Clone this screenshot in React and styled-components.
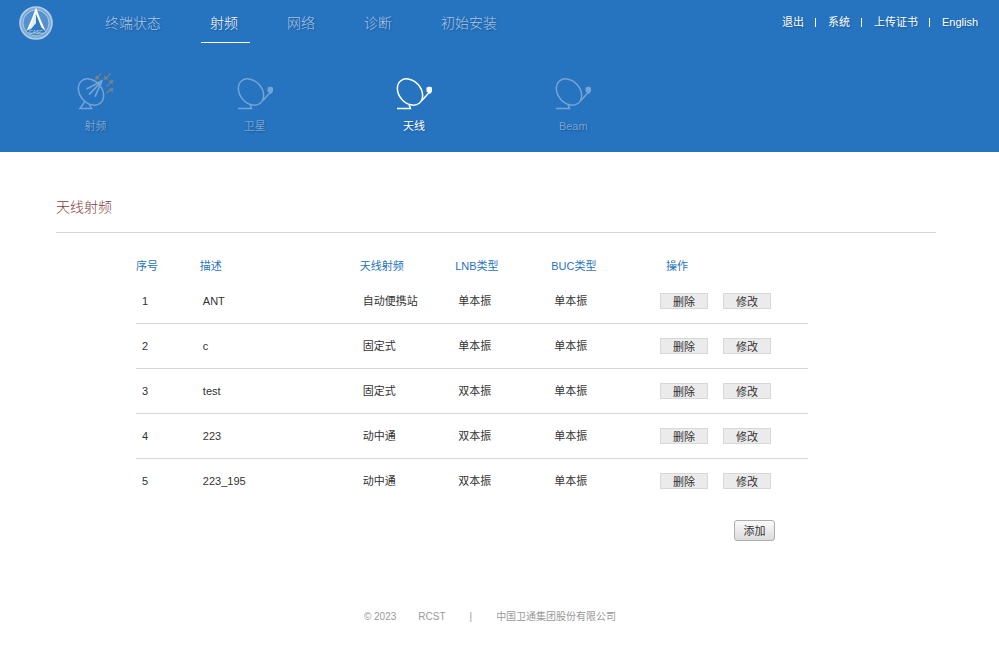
import React from "react";
import styled, { createGlobalStyle } from "styled-components";

const Global = createGlobalStyle`
  * { box-sizing: border-box; }
  body {
    margin: 0;
    background: #fff;
    color: #333;
    font: 11px/16px "Liberation Sans", "Noto Sans CJK SC", sans-serif;
  }
  button { font: inherit; color: inherit; }
`;

const Header = styled.header`
  height: 152px;
  background: #2673bf;
  color: #fff;
  text-shadow: 1px 1px 2px rgba(0, 0, 0, 0.25);
`;

const TopBar = styled.div`
  display: flex;
  height: 46px;
  padding: 0 21px 0 18px;
`;

const Brand = styled.a`
  width: 36px;
  height: 36px;
  margin: 5px 42px 0 0;
`;

const MainNav = styled.nav`
  display: flex;
  gap: 28px;
  margin-right: auto;
`;

const NavLink = styled.a`
  height: 43px;
  padding: 14px 12px 0 9px;
  border-bottom: 1px solid ${(p) => (p.$active ? "#fff" : "transparent")};
  color: ${(p) => (p.$active ? "#fff" : "#a8c6e6")};
  font-size: 14px;
  line-height: 18px;
  font-weight: 300;
  text-decoration: none;
  white-space: nowrap;
`;

const UserNav = styled.nav`
  display: flex;
  padding-top: 14px;
`;

const UserLink = styled.a`
  color: #fff;
  text-decoration: none;
  white-space: nowrap;

  & + &::before {
    content: "";
    display: inline-block;
    width: 1px;
    height: 9px;
    margin: 0 12px 0 11px;
    background: #fff;
    vertical-align: -1px;
  }
`;

const SubNav = styled.nav`
  display: flex;
  padding: 26px 18px 0 16px;
`;

const SubLink = styled.a`
  display: flex;
  flex: 0 0 16.5%;
  flex-direction: column;
  align-items: center;
  gap: 8px;
  color: ${(p) => (p.$active ? "#fff" : "#73a4d6")};
  text-decoration: none;

  svg { display: block; }
`;

const Main = styled.main`
  padding: 46px 63px 0 56px;
`;

const Title = styled.h1`
  margin: 0;
  padding-bottom: 15px;
  border-bottom: 1px solid #d8d8d8;
  color: #853c3c;
  font-size: 14px;
  font-weight: 300;
  line-height: 19px;
`;

const Content = styled.section`
  padding: 20px 128px 0 80px;
`;

const Table = styled.table`
  width: 100%;
  table-layout: fixed;
  border-collapse: separate;
  border-spacing: 0;
`;

const Col = styled.col`
  width: ${(p) => p.$w}%;
`;

const HeadCell = styled.th`
  height: 26px;
  padding: 0 0 0 ${(p) => (p.$inset ? 18 : 0)}px;
  color: #2673bf;
  font-weight: 400;
  text-align: left;
`;

const Row = styled.tr`
  & > td { border-bottom: 1px solid #d8d8d8; }
  &:last-child > td { border-color: transparent; }
`;

const Cell = styled.td`
  height: 45px;
  padding: 0 0 0 3px;

  &:first-child { padding-left: 6px; }
`;

const ActionCell = styled.td`
  padding: 0 0 0 12px;
`;

const Actions = styled.div`
  display: flex;
  gap: 15px;
`;

const RowButton = styled.button`
  width: 48px;
  height: 16px;
  padding: 1px 0 0;
  border: 1px solid #d8d8d8;
  background: #ebebeb;
  line-height: 14px;
`;

const AddRow = styled.div`
  display: flex;
  justify-content: flex-end;
  padding: 16px 33px 0 0;
`;

const AddButton = styled.button`
  width: 41px;
  height: 21px;
  padding: 1px 0 0;
  border: 1px solid #adadad;
  border-radius: 3px;
  background: linear-gradient(#fafafa, #dcdcdc);
  line-height: 18px;
`;

const Footer = styled.footer`
  display: flex;
  justify-content: center;
  padding: 68px 19px 24px 0;
  color: #999;
  font-size: 10px;
  line-height: 16px;
`;

const FooterText = styled.span`
  margin-left: ${(p) => p.$gap || 0}px;
`;

const Logo = () => (
  <svg width="36" height="36" viewBox="0 0 36 36" role="img" aria-label="CASC">
    <circle cx="18" cy="18" r="16" fill="#7dabd9" stroke="#b3cde9" strokeWidth="1.6" />
    <circle cx="18" cy="18" r="13" fill="#5591cd" stroke="#b9d2eb" strokeWidth="0.8" />
    <path d="M18 4 27 27H9Z" fill="#2f79c2" />
    <path d="M18 2.500 21.500 12 27.500 26 23.500 22.500 18 9 12.500 22.500 8.500 26 14.500 12Z" fill="#fff" />
    <path d="M18 9v9l-5 6-3 1Z" fill="#e2edf8" />
    <text x="18" y="28.500" fill="#d8e6f5" fontFamily="Liberation Sans" fontSize="5" textAnchor="middle">CASC</text>
  </svg>
);

const DishIcon = ({ signal }) => (
  <svg width="38" height="38" viewBox="0 0 38 38" fill="none" stroke="currentColor" strokeWidth="1.5" aria-hidden="true">
    {signal ? (
      <>
        <ellipse cx="14" cy="20" rx="11" ry="14.500" transform="rotate(-41 14 20)" />
        <path d="M7.500 30 3 36.500h11.500L12 32" />
        <path d="M25 9 9.500 17M25 9 12 22.700M25 9 18 24.700" strokeWidth="1.700" />
        <path d="m19.500 10.500 6.500-3-2.500 7Z" fill="currentColor" stroke="none" />
        <g stroke="#76818c" strokeWidth="1.200">
          <path d="M24.300 1.300 20 6M34 1.300 29 6M29.300 14.700 34 10M29.300 21.300 34 17.500" />
        </g>
        <path
          d="m18 8 1-5 4 3.500ZM26.500 8l1-4.500 4 3.500ZM36.500 7.500l-1 5-4-3.500ZM36.500 15.500l-1 5-4-3.500Z"
          fill="#76818c"
          stroke="none"
        />
      </>
    ) : (
      <>
        <ellipse cx="15" cy="20" rx="11" ry="14.500" transform="rotate(-41 15 20)" />
        <path d="m14 32.500 1.500 4H2M27 28.500l7.500-8.500v-3" />
        <path d="m31.500 15.500 3-1 2.500 1v4l-2 2.500-3.500-2.500Z" fill="currentColor" stroke="none" />
      </>
    )}
  </svg>
);

const mainItems = ["终端状态", "射频", "网络", "诊断", "初始安装"];
const userItems = ["退出", "系统", "上传证书", "English"];
const subItems = ["射频", "卫星", "天线", "Beam"];
const headings = ["序号", "描述", "天线射频", "LNB类型", "BUC类型", "操作"];
const widths = [9.5, 23.8, 14.2, 14.3, 14.4, 23.8];
const rows = [
  ["1", "ANT", "自动便携站", "单本振", "单本振"],
  ["2", "c", "固定式", "单本振", "单本振"],
  ["3", "test", "固定式", "双本振", "单本振"],
  ["4", "223", "动中通", "双本振", "单本振"],
  ["5", "223_195", "动中通", "双本振", "单本振"],
];

export default function App() {
  return (
    <>
      <Global />
      <Header>
        <TopBar>
          <Brand href="#"><Logo /></Brand>
          <MainNav>
            {mainItems.map((t, i) => <NavLink key={t} href="#" $active={i === 1}>{t}</NavLink>)}
          </MainNav>
          <UserNav>
            {userItems.map((t) => <UserLink key={t} href="#">{t}</UserLink>)}
          </UserNav>
        </TopBar>
        <SubNav>
          {subItems.map((t, i) => (
            <SubLink key={t} href="#" $active={i === 2}>
              <DishIcon signal={i === 0} />
              {t}
            </SubLink>
          ))}
        </SubNav>
      </Header>
      <Main>
        <Title>天线射频</Title>
        <Content>
          <Table>
            <colgroup>
              {widths.map((w, i) => <Col key={i} $w={w} />)}
            </colgroup>
            <thead>
              <tr>
                {headings.map((h, i) => <HeadCell key={h} scope="col" $inset={i === 5}>{h}</HeadCell>)}
              </tr>
            </thead>
            <tbody>
              {rows.map((r) => (
                <Row key={r[0]}>
                  {r.map((v, i) => <Cell key={i}>{v}</Cell>)}
                  <ActionCell>
                    <Actions>
                      <RowButton type="button">删除</RowButton>
                      <RowButton type="button">修改</RowButton>
                    </Actions>
                  </ActionCell>
                </Row>
              ))}
            </tbody>
          </Table>
          <AddRow><AddButton type="button">添加</AddButton></AddRow>
        </Content>
      </Main>
      <Footer>
        <FooterText>© 2023</FooterText>
        <FooterText $gap={22}>RCST</FooterText>
        <FooterText $gap={24}>|</FooterText>
        <FooterText $gap={24}>中国卫通集团股份有限公司</FooterText>
      </Footer>
    </>
  );
}
